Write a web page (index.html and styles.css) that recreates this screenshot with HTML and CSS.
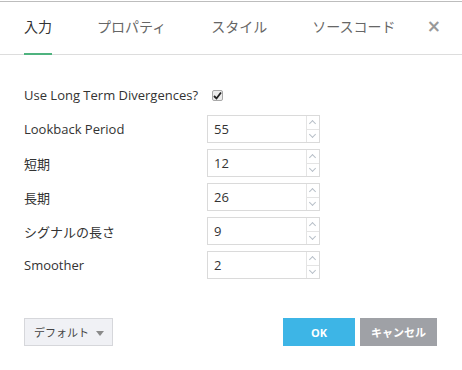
FILE: index.html
```html
<!DOCTYPE html>
<html lang="ja">
<head>
  <meta charset="UTF-8" />
  <title>入力</title>
  <link rel="stylesheet" href="styles.css">
</head>
<body>
  <div class="dialog">
    <div class="tabs">
      <span class="tab active">入力</span>
      <span class="tab">プロパティ</span>
      <span class="tab">スタイル</span>
      <span class="tab">ソースコード</span>
      <span class="close">&times;</span>
    </div>

    <div class="form">
      <label class="label">Use Long Term Divergences?</label>
      <div class="field">
        <span class="check">
          <svg width="9" height="9" viewBox="0 0 9 9"><path d="M1 5 L3.5 7.5 L8 1.5" fill="none" stroke="#222" stroke-width="1.8"/></svg>
        </span>
      </div>

      <label class="label">Lookback Period</label>
      <div class="spin"><span class="value">55</span><span class="arrows"><i class="up"></i><i class="down"></i></span></div>

      <label class="label">短期</label>
      <div class="spin"><span class="value">12</span><span class="arrows"><i class="up"></i><i class="down"></i></span></div>

      <label class="label">長期</label>
      <div class="spin"><span class="value">26</span><span class="arrows"><i class="up"></i><i class="down"></i></span></div>

      <label class="label">シグナルの長さ</label>
      <div class="spin"><span class="value">9</span><span class="arrows"><i class="up"></i><i class="down"></i></span></div>

      <label class="label">Smoother</label>
      <div class="spin"><span class="value">2</span><span class="arrows"><i class="up"></i><i class="down"></i></span></div>
    </div>

    <div class="footer">
      <button class="btn-default">デフォルト <span class="caret"></span></button>
      <div class="actions">
        <button class="btn-ok">OK</button>
        <button class="btn-cancel">キャンセル</button>
      </div>
    </div>
  </div>
</body>
</html>
```

FILE: styles.css
```css
:root {
  --texto: #333;
  --cinza-texto: #666;
  --borda: #dadada;
  --verde: #4fb37f;
  --azul: #3db5e6;
  --cinza-btn: #9fa1a6;
}

body {
  margin: 0;
  padding-top: 1px;
  background: #fff;
  font-family: "Open Sans", "Noto Sans CJK JP", sans-serif;
  color: var(--texto);
}

.dialog {
  width: 462px;
  height: 369px;
  border-top: 1px solid #bdbdbd;
  box-sizing: border-box;
}

.tabs {
  display: flex;
  align-items: stretch;
  height: 52px;
  padding: 0 0 0 24px;
  border-bottom: 1px solid #ddd;
  font-size: 14px;
  white-space: nowrap;
}

.tab {
  flex-shrink: 0;
  display: flex;
  align-items: center;
  margin-right: 45px;
  color: var(--cinza-texto);
  border-bottom: 2px solid transparent;
  margin-bottom: -1px;
  padding-bottom: 3px;
}

.tab:nth-child(4) {
  margin-right: 0;
}

.tab.active {
  color: var(--texto);
  border-bottom-color: var(--verde);
}

.close {
  margin-left: auto;
  margin-right: 21px;
  display: flex;
  align-items: center;
  font-size: 17px;
  font-weight: bold;
  color: #999;
  font-family: "DejaVu Sans", sans-serif;
  padding-bottom: 5px;
}

.form {
  display: grid;
  grid-template-columns: 183px 113px;
  grid-auto-rows: 28px;
  row-gap: 6px;
  padding: 26px 0 0 24px;
  font-size: 13px;
}

.label {
  display: flex;
  align-items: center;
}

.field {
  display: flex;
  align-items: center;
  padding-left: 5px;
}

.check {
  width: 9px;
  height: 9px;
  border: 1px solid #a8a8a8;
  border-radius: 2px;
  background: #ececec;
  display: flex;
  align-items: center;
  justify-content: center;
}

.spin {
  display: flex;
  border: 1px solid var(--borda);
  box-sizing: border-box;
}

.value {
  flex: 1;
  display: flex;
  align-items: center;
  padding-left: 6px;
  font-size: 13px;
}

.arrows {
  width: 12px;
  display: flex;
  flex-direction: column;
  border-left: 1px solid #e4e4e4;
}

.arrows i {
  flex: 1;
  position: relative;
}

.arrows .up {
  border-bottom: 1px solid #e4e4e4;
}

.arrows i::after {
  content: "";
  position: absolute;
  left: 3px;
  width: 4px;
  height: 4px;
  border-left: 1px solid #b8c0c8;
  border-top: 1px solid #b8c0c8;
}

.arrows .up::after {
  top: 5px;
  transform: rotate(45deg);
}

.arrows .down::after {
  top: 2px;
  transform: rotate(225deg);
}

.footer {
  display: flex;
  justify-content: space-between;
  padding: 39px 25px 0 24px;
}

button {
  font-family: "Open Sans", "Noto Sans CJK JP", sans-serif;
  height: 28px;
  border: none;
  cursor: pointer;
}

.btn-default {
  width: 89px;
  background: #f0f1f5;
  border: 1px solid #d6d7db;
  color: #444;
  font-size: 11px;
  padding: 0 0 0 9px;
  text-align: left;
}

.caret {
  display: inline-block;
  margin-left: 4px;
  border-left: 4px solid transparent;
  border-right: 4px solid transparent;
  border-top: 5px solid #8a8a8a;
  vertical-align: 1px;
}

.actions {
  display: flex;
  gap: 5px;
}

.btn-ok, .btn-cancel {
  color: #fff;
  font-weight: bold;
  font-size: 11px;
}

.btn-ok {
  width: 72px;
  background: var(--azul);
}

.btn-cancel {
  width: 77px;
  background: var(--cinza-btn);
}
```
